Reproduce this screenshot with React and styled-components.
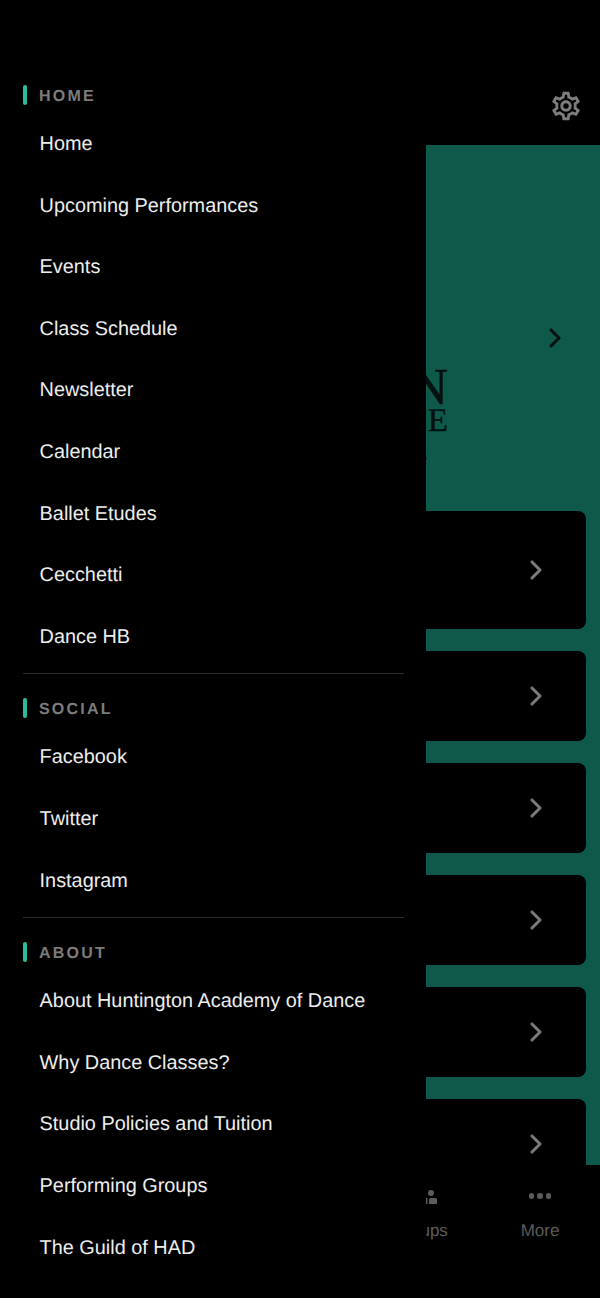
import React from "react";
import styled, { createGlobalStyle } from "styled-components";
import { ChevronRight } from "lucide-react";
import { MdOutlineSettings } from "react-icons/md";

const menu = [
  {
    title: "HOME",
    items: [
      "Home",
      "Upcoming Performances",
      "Events",
      "Class Schedule",
      "Newsletter",
      "Calendar",
      "Ballet Etudes",
      "Cecchetti",
      "Dance HB",
    ],
  },
  { title: "SOCIAL", items: ["Facebook", "Twitter", "Instagram"] },
  {
    title: "ABOUT",
    items: [
      "About Huntington Academy of Dance",
      "Why Dance Classes?",
      "Studio Policies and Tuition",
      "Performing Groups",
      "The Guild of HAD",
    ],
  },
];

const cardHeights = [118, 90, 90, 90, 90, 90];

const App = () => {
  return (
    <Screen>
      <GlobalStyle />
      <Header>
        <MdOutlineSettings size={34} />
      </Header>
      <Content>
        <Hero>
          <HeroChevron>
            <ChevronRight size={32} strokeWidth={2.3} />
          </HeroChevron>
          <Logo>
            <LogoLine $size={52} $height={40}>N</LogoLine>
            <LogoLine $size={33} $height={27}>E</LogoLine>
            <LogoLine $size={16} $height={20} $gap={11} $inset={21}>E</LogoLine>
          </Logo>
        </Hero>
        <CardList>
          {cardHeights.map((height, i) => (
            <Card key={i} $height={height}>
              <ChevronRight size={32} strokeWidth={2.3} />
            </Card>
          ))}
        </CardList>
      </Content>
      <TabBar>
        <Tab>
          <GroupIcon viewBox="0 0 36 16">
            <circle cx="29" cy="5" r="3" />
            <path d="M27 16v-4c0-1.4.8-2 2-2h4c1.200 0 2 .6 2 2v4z" />
            <path d="M25.500 16h-15v-6h15z" />
          </GroupIcon>
          <TabLabel>Groups</TabLabel>
        </Tab>
        <Tab>
          <Dots>
            <Dot />
            <Dot />
            <Dot />
          </Dots>
          <TabLabel>More</TabLabel>
        </Tab>
      </TabBar>
      <Drawer>
        {menu.map((section) => (
          <Section key={section.title}>
            <SectionTitle>{section.title}</SectionTitle>
            {section.items.map((item) => (
              <MenuItem key={item}>{item}</MenuItem>
            ))}
          </Section>
        ))}
      </Drawer>
    </Screen>
  );
};

const GlobalStyle = createGlobalStyle`
  html, body {
    margin: 0;
    padding: 0;
    background: #000000;
  }
`;

const Screen = styled.div`
  position: relative;
  display: flex;
  flex-direction: column;
  width: 600px;
  height: 1298px;
  overflow: hidden;
  background: #000000;
  font-family: "Liberation Sans", Arial, sans-serif;
  text-rendering: geometricPrecision;
`;

const Header = styled.header`
  display: flex;
  justify-content: flex-end;
  align-items: flex-start;
  height: 145px;
  padding: 89px 17px 0 0;
  box-sizing: border-box;
  color: #7d7d7d;
  flex-shrink: 0;
`;

const Content = styled.main`
  height: 1020px;
  background: #0e594a;
  overflow: hidden;
  flex-shrink: 0;
`;

const Hero = styled.section`
  height: 366px;
  padding-top: 177px;
  box-sizing: border-box;
`;

const HeroChevron = styled.div`
  display: flex;
  justify-content: flex-end;
  height: 32px;
  padding-right: 29px;
  color: #04110f;
`;

const Logo = styled.div`
  width: 448px;
  margin-top: 14px;
  color: #04110f;
  font-family: "Liberation Serif", "Times New Roman", serif;
  text-align: right;
  -webkit-text-stroke: 0.4px #04110f;
`;

const LogoLine = styled.div`
  height: ${(p) => p.$height}px;
  margin-top: ${(p) => p.$gap || 0}px;
  padding-right: ${(p) => p.$inset || 0}px;
  font-size: ${(p) => p.$size}px;
  line-height: ${(p) => p.$height}px;
  white-space: nowrap;
`;

const CardList = styled.div`
  display: flex;
  flex-direction: column;
  gap: 22px;
  width: 586px;
`;

const Card = styled.div`
  display: flex;
  justify-content: flex-end;
  align-items: center;
  height: ${(p) => p.$height}px;
  padding-right: 34px;
  box-sizing: border-box;
  background: #000000;
  border-radius: 0 8px 8px 0;
  color: #7b7b7b;
  flex-shrink: 0;
`;

const TabBar = styled.nav`
  display: flex;
  justify-content: flex-end;
  height: 133px;
  background: #000000;
`;

const Tab = styled.div`
  display: flex;
  flex-direction: column;
  align-items: center;
  width: 120px;
  padding-top: 23px;
  box-sizing: border-box;
  color: #5c5c5c;
`;

const GroupIcon = styled.svg`
  width: 36px;
  height: 16px;
  fill: #5c5c5c;
`;

const Dots = styled.div`
  display: flex;
  align-items: center;
  gap: 3px;
  height: 16px;
`;

const Dot = styled.span`
  width: 5.5px;
  height: 5.5px;
  border-radius: 50%;
  background: #5c5c5c;
`;

const TabLabel = styled.span`
  margin-top: 17px;
  font-size: 17px;
  line-height: 20px;
`;

const Drawer = styled.aside`
  position: absolute;
  top: 0;
  left: 0;
  bottom: 0;
  width: 426px;
  padding: 87px 22px 0 23px;
  box-sizing: border-box;
  background: #000000;
  overflow: hidden;
`;

const Section = styled.section`
  padding-bottom: 5px;
  margin-bottom: 26px;
  border-bottom: 1px solid #2b2b2b;

  &:last-child {
    border-bottom: 0;
  }
`;

const SectionTitle = styled.h2`
  display: flex;
  align-items: center;
  height: 20px;
  margin: 0 0 7px;
  font-size: 16px;
  font-weight: 700;
  letter-spacing: 2.2px;
  color: #7c7c7c;

  &::before {
    content: "";
    width: 4px;
    height: 20px;
    margin-top: -4px;
    margin-right: 12px;
    border-radius: 2px;
    background: #2bbb9b;
  }
`;

const MenuItem = styled.div`
  height: 61.6px;
  padding-left: 16.6px;
  font-size: 19.86px;
  line-height: 61.6px;
  color: #eeeeee;
  white-space: nowrap;
`;

export default App;
